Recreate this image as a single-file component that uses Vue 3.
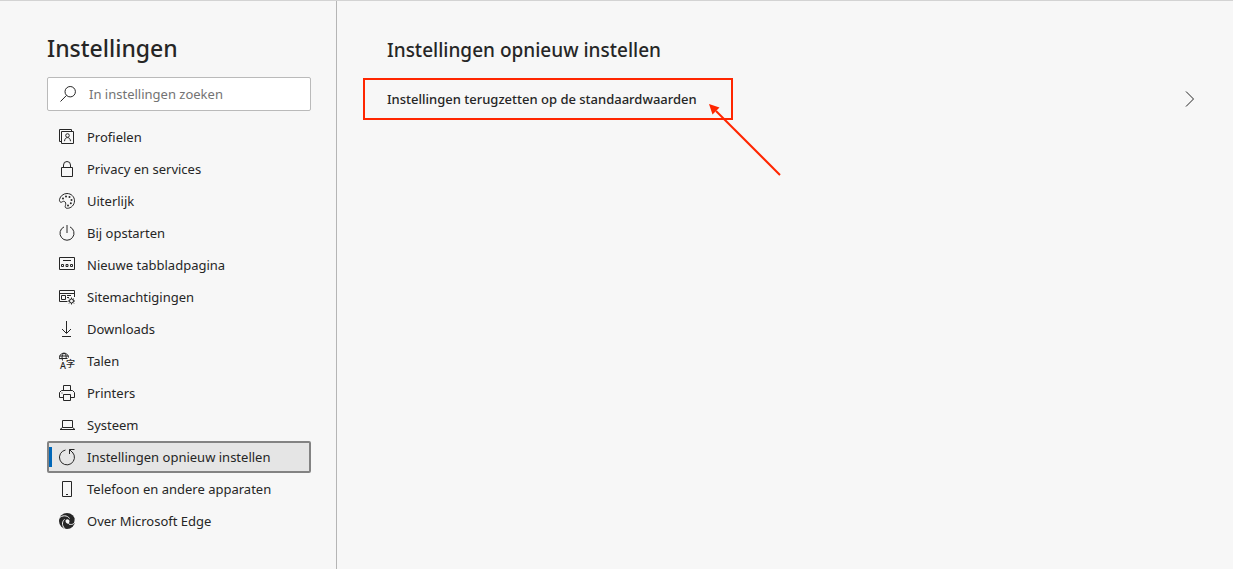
<script setup>
import { ref } from 'vue'

const query = ref('')
const active = ref('reset')
const items = [
  { id: 'profiles', label: 'Profielen' },
  { id: 'privacy', label: 'Privacy en services' },
  { id: 'appearance', label: 'Uiterlijk' },
  { id: 'startup', label: 'Bij opstarten' },
  { id: 'newtab', label: 'Nieuwe tabbladpagina' },
  { id: 'permissions', label: 'Sitemachtigingen' },
  { id: 'downloads', label: 'Downloads' },
  { id: 'languages', label: 'Talen' },
  { id: 'printers', label: 'Printers' },
  { id: 'system', label: 'Systeem' },
  { id: 'reset', label: 'Instellingen opnieuw instellen' },
  { id: 'phone', label: 'Telefoon en andere apparaten' },
  { id: 'about', label: 'Over Microsoft Edge' }
]
</script>

<template>
  <div class="page">
    <aside class="sidebar">
      <h1>Instellingen</h1>
      <label class="search">
        <svg class="search-icon" viewBox="0 0 18 18" aria-hidden="true">
          <circle cx="11.200" cy="6.700" r="5.200" />
          <path d="M7.500 10.400 1.500 16.500" />
        </svg>
        <input v-model="query" type="text" placeholder="In instellingen zoeken" aria-label="In instellingen zoeken" />
      </label>
      <nav>
        <a
          v-for="item in items"
          :key="item.id"
          href="#"
          class="item"
          :class="{ active: active === item.id }"
          @click.prevent="active = item.id"
        >
          <svg class="icon" viewBox="0 0 18 18" aria-hidden="true">
            <g v-if="item.id === 'profiles'">
              <path d="M3.500 13.500h-2v-12h12v2" />
              <path d="M3.500 3.500h12v12h-12z" />
              <circle cx="9.500" cy="7.500" r="1.800" />
              <path d="M6.500 13.200c.2-2.400 1.300-3.600 3-3.600s2.800 1.200 3 3.600" />
            </g>
            <g v-else-if="item.id === 'privacy'">
              <path d="M3.500 7.500h11v9h-11z" />
              <path d="M5.500 7.500v-2.500a3.500 3.500 0 0 1 7 0v2.500" />
            </g>
            <g v-else-if="item.id === 'appearance'">
              <path d="M1.500 7.400C2.300 4 5.400 1.500 9 1.500c4.200 0 7.500 3.200 7.500 7.300s-3.300 7.500-7.200 7.500c-1.900 0-2.500-1.200-1.900-2.700.6-1.700.5-3.600-1.100-4.200-1-.4-1.700.2-2.500.7-1.400.8-2.700-.8-2.300-2.700Z" />
              <g class="solid">
                <circle cx="5" cy="6.500" r="1" /><circle cx="8" cy="4.500" r="1" /><circle cx="11.500" cy="5" r="1" />
                <circle cx="13.500" cy="8" r="1" /><circle cx="12.800" cy="11.300" r="1" /><circle cx="10" cy="13.500" r="1" />
              </g>
            </g>
            <g v-else-if="item.id === 'startup'">
              <path d="M6 2.900a7 7 0 1 0 6 0M9 1v8" />
            </g>
            <g v-else-if="item.id === 'newtab'">
              <path d="M1.500 1.500h15v12h-15zM5 4.500h8" />
              <path d="M3.500 8.500h2v2h-2zM8 8.500h2v2h-2zM12.500 8.500h2v2h-2z" />
            </g>
            <g v-else-if="item.id === 'permissions'">
              <path d="M9.500 13.500h-8v-11h15v6.500M1.500 5.500h15M3.500 7.500h4v4h-4zM9 7.500h4M9 9.500h2" />
              <circle cx="13.500" cy="13" r="2" />
              <path d="M13.500 9.500V11M13.500 15v1.500M10 13h1.500M15.500 13H17M11 10.500l1.100 1.100M14.900 14.400l1.100 1.100M16 10.500l-1.100 1.100M12.100 14.400 11 15.500" />
            </g>
            <g v-else-if="item.id === 'downloads'">
              <path d="M8.500 1v12M4 9l4.500 4.500L13 9M4 16.500h9" />
            </g>
            <g v-else-if="item.id === 'languages'">
              <path d="M1.800 7.200A4.500 4.500 0 1 1 10.500 5.500M1.500 4h9M1.500 6.500h8M4.500 8.500C3.500 5.500 4 2.500 6 1c2 1.500 2.500 3.500 2 6" />
              <text x="2" y="17" class="latin">A</text>
              <text x="8" y="15" class="han">字</text>
            </g>
            <g v-else-if="item.id === 'printers'">
              <path d="M5.500 6.500v-5h7v5M5.500 13.500h-4v-5l2-2h11l2 2v5h-4M5.500 10.500h7v6h-7zM3.500 9h1" />
            </g>
            <g v-else-if="item.id === 'system'">
              <path d="M4.500 4.500h10v7h-10zM4.500 11.500l-2.500 2h15l-2.500-2" />
            </g>
            <g v-else-if="item.id === 'reset'">
              <path d="M7.500 2A7.500 7.500 0 1 0 14.500 4.300M11.500 6V1.500h5M11.500 1.500l3.500 3.500" />
            </g>
            <g v-else-if="item.id === 'phone'">
              <path d="M4.500 1.500h9v15h-9zM8 14.500h2" />
            </g>
            <g v-else>
              <circle class="solid" cx="9" cy="9" r="8" />
              <path class="cut" d="M.8 6.500C4 2.800 9.500 3 11.500 6.500M17 7.500c.5 4-2.500 5.800-6 4.600M7.700 17.500C3.800 14.500 3.500 10 6.500 7.300" />
              <path class="hole" d="M7.700 8C9.500 6.600 11.700 7.700 11.500 9.600c-.1 1-.9 1.400-.6 2.400C8 11.800 7 9.800 7.700 8Z" />
            </g>
          </svg>
          <span>{{ item.label }}</span>
        </a>
      </nav>
    </aside>
    <main class="content">
      <h2>Instellingen opnieuw instellen</h2>
      <button type="button" class="row">
        <span class="highlight">
          Instellingen terugzetten op de standaardwaarden
          <svg class="arrow" viewBox="0 0 72 72" aria-hidden="true">
            <path class="shaft" d="M7 7 71 71" />
            <path class="head" d="M0 0 10.500 3.500 3.500 10.500Z" />
          </svg>
        </span>
        <svg class="chevron" viewBox="0 0 10 18" aria-hidden="true">
          <path d="M1 1.500 8.500 9 1 16.500" />
        </svg>
      </button>
    </main>
  </div>
</template>

<style>
body {
  background: #f7f7f7;
}
</style>

<style scoped>
.page {
  display: flex;
  box-sizing: border-box;
  min-height: 100vh;
  border-top: 1px solid #d3d3d3;
  background: #f7f7f7;
  color: #262626;
  font-family: "Segoe UI", "Noto Sans", "Open Sans", sans-serif;
  font-size: 13px;
}
h1,
h2 {
  margin: 0;
  font-weight: 500;
}
.sidebar {
  flex: none;
  box-sizing: border-box;
  width: 337px;
  padding: 31px 25px 0 47px;
  border-right: 1px solid #b5b5b5;
}
h1 {
  margin-bottom: 13px;
  font-size: 23px;
  line-height: 32px;
}
.search {
  display: flex;
  align-items: center;
  gap: 12px;
  box-sizing: border-box;
  height: 34px;
  margin-bottom: 10px;
  padding: 0 11px;
  border: 1px solid #bababa;
  border-radius: 2px;
  background: #fff;
}
.search input {
  flex: 1;
  min-width: 0;
  padding: 0;
  border: 0;
  outline: 0;
  background: transparent;
  color: inherit;
  font: inherit;
}
.search input::placeholder {
  color: #737373;
  opacity: 1;
}
svg {
  flex: none;
  overflow: visible;
  fill: none;
  stroke: #262626;
}
.search-icon,
.icon {
  width: 18px;
  height: 18px;
}
.item {
  display: flex;
  align-items: center;
  gap: 11px;
  position: relative;
  box-sizing: border-box;
  height: 32px;
  padding: 0 9px;
  border: 2px solid transparent;
  border-radius: 2px;
  color: inherit;
  text-decoration: none;
}
.item.active {
  border-color: #838383;
  background: #e5e5e5;
}
.item.active::before {
  content: "";
  position: absolute;
  left: 0;
  top: 4px;
  bottom: 4px;
  width: 3px;
  background: #0067b8;
}
.solid {
  fill: #262626;
  stroke: none;
}
.cut {
  stroke: #f7f7f7;
}
.hole {
  fill: #f7f7f7;
  stroke: none;
}
.latin,
.han {
  fill: #262626;
  stroke: none;
  font-weight: 500;
}
.latin {
  font-size: 9px;
}
.han {
  font-family: "Noto Sans CJK SC", sans-serif;
  font-size: 9px;
}
.content {
  flex: 1;
  min-width: 0;
  padding: 36px 23px 0 26px;
}
h2 {
  margin-bottom: 15px;
  padding-left: 24px;
  font-size: 19px;
  line-height: 26px;
}
.row {
  display: flex;
  align-items: center;
  justify-content: space-between;
  width: 100%;
  padding: 0 15px 0 0;
  border: 0;
  background: transparent;
  color: inherit;
  font: inherit;
  text-align: left;
}
.highlight {
  position: relative;
  box-sizing: border-box;
  min-width: 370px;
  padding: 9px 22px;
  border: 2px solid #ff2600;
  font-weight: 500;
  line-height: 20px;
}
.arrow {
  position: absolute;
  left: 344px;
  top: 24px;
  width: 72px;
  height: 72px;
}
.shaft {
  stroke: #ff2600;
  stroke-width: 2;
}
.head {
  fill: #ff2600;
  stroke: none;
}
.chevron {
  width: 10px;
  height: 18px;
}
</style>
